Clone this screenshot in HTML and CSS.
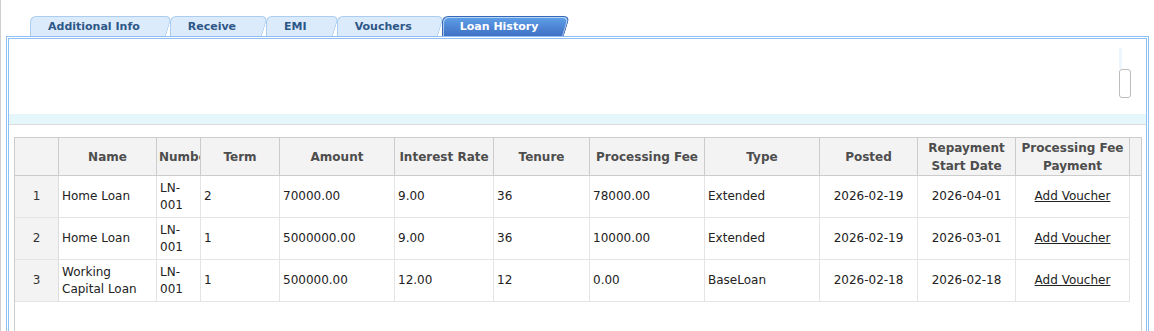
FILE: index.html
```html
<!DOCTYPE html>
<html lang="en">
<head>
    <meta charset="UTF-8">
    <meta name="viewport" content="width=device-width, initial-scale=1.0">
    <title>Loan History</title>
    <link rel="stylesheet" href="styles.css">
</head>
<body>
    <div class="page">
        <div class="tabs">
            <div class="tab">Additional Info</div>
            <div class="tab">Receive</div>
            <div class="tab">EMI</div>
            <div class="tab">Vouchers</div>
            <div class="tab active">Loan History</div>
        </div>

        <div class="panel">
            <div class="panel-inner">
                <div class="form-area">
                    <div class="scroller">
                        <div class="track"></div>
                        <div class="thumb"></div>
                    </div>
                </div>
                <div class="band"></div>

                <div class="grid">
                    <div class="row head">
                        <div class="cell"><span></span></div>
                        <div class="cell"><span>Name</span></div>
                        <div class="cell"><span>Number</span></div>
                        <div class="cell"><span>Term</span></div>
                        <div class="cell"><span>Amount</span></div>
                        <div class="cell"><span>Interest Rate</span></div>
                        <div class="cell"><span>Tenure</span></div>
                        <div class="cell"><span>Processing Fee</span></div>
                        <div class="cell"><span>Type</span></div>
                        <div class="cell"><span>Posted</span></div>
                        <div class="cell"><span>Repayment Start Date</span></div>
                        <div class="cell"><span>Processing Fee Payment</span></div>
                        <div class="cell filler"></div>
                    </div>

                    <div class="row">
                        <div class="cell idx"><span>1</span></div>
                        <div class="cell"><span>Home Loan</span></div>
                        <div class="cell"><span>LN-001</span></div>
                        <div class="cell"><span>2</span></div>
                        <div class="cell"><span>70000.00</span></div>
                        <div class="cell"><span>9.00</span></div>
                        <div class="cell"><span>36</span></div>
                        <div class="cell"><span>78000.00</span></div>
                        <div class="cell"><span>Extended</span></div>
                        <div class="cell center"><span>2026-02-19</span></div>
                        <div class="cell center"><span>2026-04-01</span></div>
                        <div class="cell center"><span><a href="#">Add Voucher</a></span></div>
                    </div>

                    <div class="row">
                        <div class="cell idx"><span>2</span></div>
                        <div class="cell"><span>Home Loan</span></div>
                        <div class="cell"><span>LN-001</span></div>
                        <div class="cell"><span>1</span></div>
                        <div class="cell"><span>5000000.00</span></div>
                        <div class="cell"><span>9.00</span></div>
                        <div class="cell"><span>36</span></div>
                        <div class="cell"><span>10000.00</span></div>
                        <div class="cell"><span>Extended</span></div>
                        <div class="cell center"><span>2026-02-19</span></div>
                        <div class="cell center"><span>2026-03-01</span></div>
                        <div class="cell center"><span><a href="#">Add Voucher</a></span></div>
                    </div>

                    <div class="row">
                        <div class="cell idx"><span>3</span></div>
                        <div class="cell"><span>Working Capital Loan</span></div>
                        <div class="cell"><span>LN-001</span></div>
                        <div class="cell"><span>1</span></div>
                        <div class="cell"><span>500000.00</span></div>
                        <div class="cell"><span>12.00</span></div>
                        <div class="cell"><span>12</span></div>
                        <div class="cell"><span>0.00</span></div>
                        <div class="cell"><span>BaseLoan</span></div>
                        <div class="cell center"><span>2026-02-18</span></div>
                        <div class="cell center"><span>2026-02-18</span></div>
                        <div class="cell center"><span><a href="#">Add Voucher</a></span></div>
                    </div>
                </div>
            </div>
        </div>
    </div>
</body>
</html>
```

FILE: styles.css
```css
html, body {
    margin: 0;
    height: 100%;
    overflow: hidden;
    background-color: #fff;
}

body {
    font-family: "DejaVu Sans", Verdana, sans-serif;
    font-size: 12px;
    color: #222;
}

.page {
    box-sizing: border-box;
    height: 100%;
    border-left: 1px solid #cfcfcf;
    padding: 16px 5px 0 5px;
}

/* tabs */

.tabs {
    display: flex;
    gap: 4px;
    padding-left: 24px;
    height: 20px;
}

.tab {
    position: relative;
    z-index: 0;
    height: 20px;
    line-height: 21px;
    padding: 0 26px 0 18px;
    font-size: 11px;
    font-weight: bold;
    color: #2d5788;
    white-space: nowrap;
}

.tab::before,
.tab::after {
    content: "";
    position: absolute;
    top: 0;
    bottom: 0;
    z-index: -1;
    background-color: #dcebfb;
    border: 1px solid #aacdf0;
    border-bottom: none;
}

.tab::before {
    left: 0;
    right: 14px;
    border-right: none;
    border-radius: 6px 0 0 0;
}

.tab::after {
    right: 0;
    width: 28px;
    border-left: none;
    border-radius: 0 6px 0 0;
    transform: skewX(-17deg);
    transform-origin: right bottom;
}

.tab.active {
    color: #fff;
}

.tab.active::before,
.tab.active::after {
    background: linear-gradient(#5fa0ea, #3f70c3);
    border-color: #3468b8;
}

.tab.active::before {
    box-shadow: inset 1px 1px 0 rgba(255, 255, 255, 0.55);
}

.tab.active::after {
    box-shadow: inset -1px 1px 0 rgba(255, 255, 255, 0.55);
}

/* panel */

.panel {
    height: 320px;
    border: 1px solid #8ec0f4;
    padding: 1px;
}

.panel-inner {
    height: 100%;
    border: 1px solid #8ec0f4;
}

.form-area {
    height: 75px;
    display: flex;
    justify-content: flex-end;
    padding: 9px 15px 0 0;
    box-sizing: border-box;
}

.scroller {
    display: flex;
    flex-direction: column;
    align-items: flex-start;
}

.track {
    width: 3px;
    height: 21px;
    background-color: #eef6fd;
}

.thumb {
    box-sizing: border-box;
    width: 12px;
    height: 29px;
    border: 1px solid #bdbdbd;
    border-radius: 3px;
}

.band {
    height: 10px;
    background-color: #e6f7fc;
    border-bottom: 1px solid #dcdcdc;
}

/* grid */

.grid {
    margin: 12px 4px 0 5px;
    height: 220px;
    border: 1px solid #cccccc;
    border-bottom: none;
}

.row {
    display: grid;
    grid-template-columns: 44px 98px 44px 79px 115px 99px 96px 115px 115px 98px 98px 114px 1fr;
}

.cell {
    box-sizing: border-box;
    height: 42px;
    display: flex;
    align-items: center;
    padding: 0 3px;
    overflow: hidden;
    line-height: 17px;
    border-right: 1px solid #e4e4e4;
    border-bottom: 1px solid #e4e4e4;
}

.cell span {
    flex: 1;
    min-width: 0;
}

.cell.center,
.cell.idx {
    text-align: center;
}

.cell.idx {
    background-color: #f3f3f3;
    border-right-color: #dcdcdc;
    color: #333;
}

.cell a {
    color: #222;
    text-decoration: underline;
}

.row.head .cell {
    height: 38px;
    background-color: #f3f3f3;
    border-right-color: #cccccc;
    border-bottom-color: #cccccc;
    font-weight: bold;
    color: #4d4d4d;
    text-align: center;
    line-height: 18px;
    padding: 0 2px;
}

.row.head .cell.filler {
    border-right: none;
}
```
